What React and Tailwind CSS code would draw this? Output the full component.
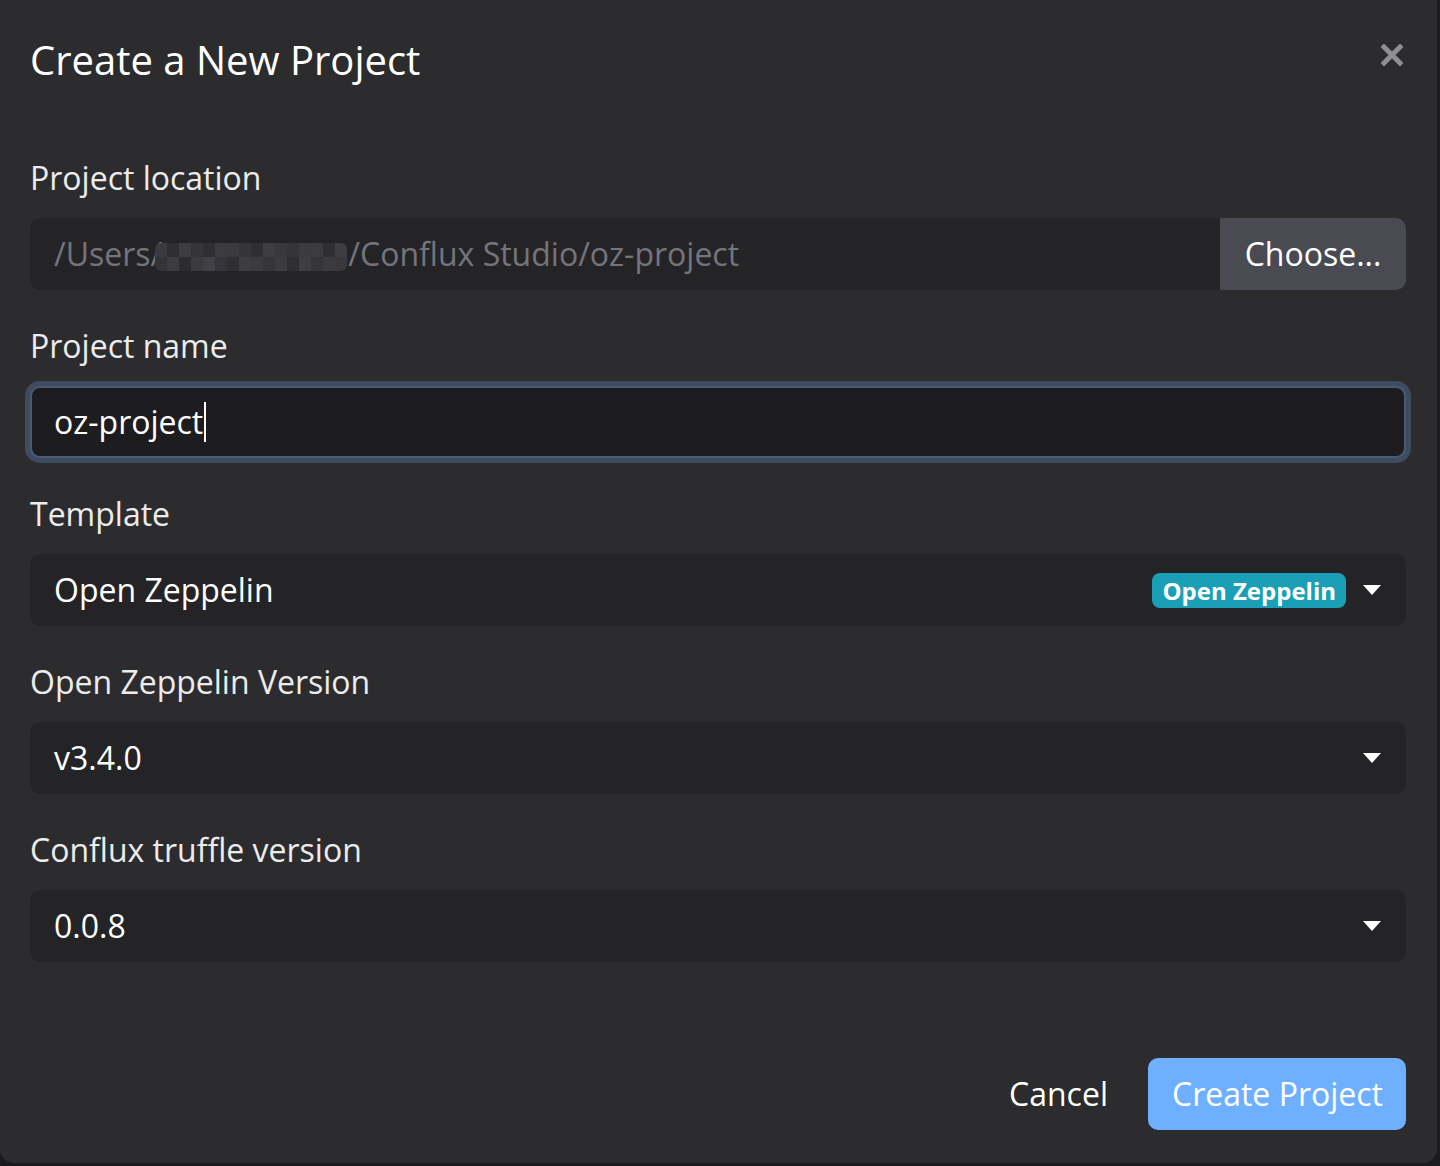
import React from 'react';

const font = { fontFamily: '"Open Sans", "Noto Sans", sans-serif' };

const Caret = () => (
  <svg width="18" height="10" viewBox="0 0 18 10" className="shrink-0">
    <path d="M0 0 L18 0 L9 10 Z" fill="#ffffff" />
  </svg>
);

const Mosaic = () => {
  const top = ['#3a3a3f', '#2f2f33', '#3d3d42', '#34343a', '#2f2f33', '#3b3b40', '#3a3a3f', '#34343a', '#2f2f33', '#3d3d42', '#38383d', '#34343a', '#3a3a3f', '#3b3b40', '#2f2f33', '#3d3d42'];
  const bot = ['#33333a', '#3b3b40', '#2d2d31', '#3a3a3f', '#404046', '#34343a', '#2f2f33', '#3d3d42', '#3a3a3f', '#34343a', '#3b3b40', '#2f2f33', '#3d3d42', '#34343a', '#3a3a3f', '#38383d'];
  return (
    <span className="inline-flex flex-col overflow-hidden rounded-[6px] align-middle">
      <span className="flex">
        {top.map((c, i) => (
          <span key={i} className="h-[14px] w-[12px]" style={{ background: c }} />
        ))}
      </span>
      <span className="flex">
        {bot.map((c, i) => (
          <span key={i} className="h-[14px] w-[12px]" style={{ background: c }} />
        ))}
      </span>
    </span>
  );
};

const Label = ({ children }) => (
  <div className="mb-4 text-[32px] leading-[48px] text-[#ececec]">{children}</div>
);

const SelectBox = ({ value, badge }) => (
  <div className="flex h-[72px] items-center rounded-[10px] bg-[#242427] pl-6 pr-[25px]">
    <span className="flex-1 text-[32px] text-white">{value}</span>
    {badge && (
      <span className="mr-[17px] rounded-[8px] bg-[#1a9fb6] px-[10px] text-[24px] font-bold leading-[35px] text-white">
        {badge}
      </span>
    )}
    <Caret />
  </div>
);

export default function App() {
  return (
    <div className="h-[1166px] w-[1440px] bg-[#1b1b1d]" style={font}>
      <div className="relative flex h-[1163px] w-[1437px] flex-col rounded-b-[14px] bg-[#2c2c2f] pl-[30px] pr-[31px]">
        <div className="flex items-center justify-between pt-[30px]">
          <h1 className="text-[40px] leading-[60px] text-white">Create a New Project</h1>
          <svg width="22" height="22" viewBox="0 0 22 22" className="mr-[3px] mt-[-10px]">
            <path d="M3 3 L19 19 M19 3 L3 19" stroke="#8e8e93" strokeWidth="5" strokeLinecap="square" />
          </svg>
        </div>

        <div className="mt-[64px]">
          <Label>Project location</Label>
          <div className="mb-8 flex h-[72px] overflow-hidden rounded-[10px] bg-[#242427]">
            <div className="flex flex-1 items-center pl-6 text-[32px] text-[#74747a]">
              <span>/Users/</span>
              <span className="-ml-[7px] mr-[1px]">
                <Mosaic />
              </span>
              <span>/Conflux Studio/oz-project</span>
            </div>
            <button className="w-[186px] bg-[#4a4a52] text-[32px] text-white">Choose...</button>
          </div>

          <Label>Project name</Label>
          <div className="mb-8 flex h-[72px] items-center rounded-[10px] border-2 border-[#4a5a74] bg-[#1d1d20] pl-[22px] shadow-[0_0_0_5px_#3f4b5f]">
            <span className="text-[32px] text-white">oz-project</span>
            <span className="ml-[1px] h-[40px] w-[2px] bg-white" />
          </div>

          <Label>Template</Label>
          <div className="mb-8">
            <SelectBox value="Open Zeppelin" badge="Open Zeppelin" />
          </div>

          <Label>Open Zeppelin Version</Label>
          <div className="mb-8">
            <SelectBox value="v3.4.0" />
          </div>

          <Label>Conflux truffle version</Label>
          <SelectBox value="0.0.8" />
        </div>

        <div className="mt-[96px] flex items-center justify-end gap-[40px]">
          <button className="text-[32px] text-white">Cancel</button>
          <button className="h-[72px] rounded-[10px] bg-[#6eb0ff] pl-6 pr-[23px] text-[32px] text-white">Create Project</button>
        </div>
      </div>
    </div>
  );
}
